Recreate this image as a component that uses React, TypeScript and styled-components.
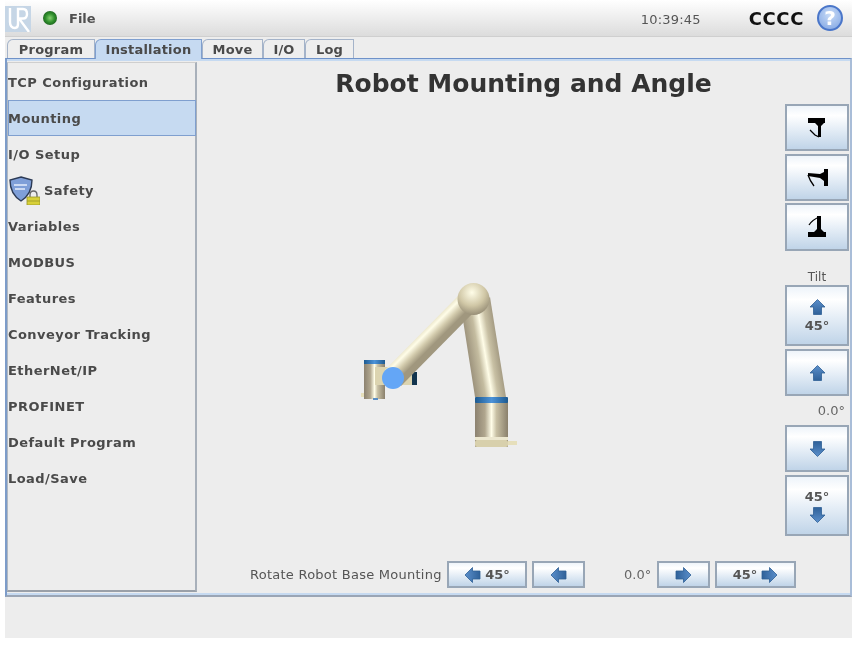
import React from 'react';
import styled, { createGlobalStyle } from 'styled-components';

const GlobalStyle = createGlobalStyle`
  html, body {
    margin: 0;
    padding: 0;
    background: #ffffff;
  }
  body {
    font-family: "DejaVu Sans", sans-serif;
    color: #3c3c3c;
  }
`;

const tabs = ['Program', 'Installation', 'Move', 'I/O', 'Log'];
const tabWidths = [88, 107, 61, 42, 49];
const menu = [
  'TCP Configuration',
  'Mounting',
  'I/O Setup',
  'Safety',
  'Variables',
  'MODBUS',
  'Features',
  'Conveyor Tracking',
  'EtherNet/IP',
  'PROFINET',
  'Default Program',
  'Load/Save',
];

type Direction = 'up' | 'down' | 'left' | 'right';

const rotation: Record<Direction, number> = { up: 0, right: 90, down: 180, left: 270 };

const Arrow: React.FC<{ dir: Direction }> = ({ dir }) => (
  <svg width="17" height="16" viewBox="0 0 16 16">
    <defs>
      <linearGradient id={`arrow-${dir}`} x1="0" y1="0" x2="0" y2="1">
        <stop offset="0" stopColor="#5b8fcb" />
        <stop offset="1" stopColor="#2f6199" />
      </linearGradient>
    </defs>
    <path
      transform={`rotate(${rotation[dir]} 8 8)`}
      d="M8 0.5 L15.5 8 L12 8 L12 15.5 L4 15.5 L4 8 L0.5 8 Z"
      fill={`url(#arrow-${dir})`}
      stroke="#2f5f96"
      strokeWidth="0.8"
    />
  </svg>
);

const MountTop = () => (
  <svg width="34" height="34" viewBox="0 0 34 34">
    <path d="M8 7 H25 V12 H24 L21 15 V26 H18 V15 L15 12 H8 Z" fill="#000" />
    <path d="M10 19 L15 24 L19 26" stroke="#000" strokeWidth="1.3" fill="none" />
  </svg>
);

const MountSide = () => (
  <svg width="34" height="34" viewBox="0 0 34 34">
    <path d="M24 8 H28 V25 H24 V20 L20 17 L8 15 V12 L20 13 L24 11 Z" fill="#000" />
    <path d="M8 14 Q10 20 14 25" stroke="#000" strokeWidth="1.3" fill="none" />
  </svg>
);

const MountFloor = () => (
  <svg width="34" height="34" viewBox="0 0 34 34">
    <path d="M8 27 V22 H14 L17 19 V6 L21 6 V19 L24 22 H26 V27 Z" fill="#000" />
    <path d="M9 15 Q12 10 20 6.5" stroke="#000" strokeWidth="1.3" fill="none" />
  </svg>
);

const RobotArm = () => (
  <RobotSvg viewBox="197 104 586 450">
    <defs>
      <linearGradient id="shaftV" x1="0" y1="0" x2="1" y2="0">
        <stop offset="0" stopColor="#8c8270" />
        <stop offset="0.3" stopColor="#b0a68e" />
        <stop offset="0.5" stopColor="#fffde8" />
        <stop offset="0.65" stopColor="#c8c0a4" />
        <stop offset="1" stopColor="#8a806c" />
      </linearGradient>
      <linearGradient id="fore" x1="467" y1="352" x2="503" y2="346" gradientUnits="userSpaceOnUse">
        <stop offset="0" stopColor="#9a907a" />
        <stop offset="0.3" stopColor="#c4bca0" />
        <stop offset="0.48" stopColor="#fffde8" />
        <stop offset="0.65" stopColor="#c8c0a4" />
        <stop offset="1" stopColor="#8e846e" />
      </linearGradient>
      <linearGradient id="upper" x1="423" y1="323" x2="439" y2="339" gradientUnits="userSpaceOnUse">
        <stop offset="0" stopColor="#cfc6a4" />
        <stop offset="0.42" stopColor="#fffde8" />
        <stop offset="0.7" stopColor="#d2caac" />
        <stop offset="1" stopColor="#a0977e" />
      </linearGradient>
      <radialGradient id="ball" cx="0.45" cy="0.3" r="0.75">
        <stop offset="0" stopColor="#fffde8" />
        <stop offset="0.55" stopColor="#d0c7a6" />
        <stop offset="1" stopColor="#8f8670" />
      </radialGradient>
      <linearGradient id="ring" x1="0" y1="0" x2="1" y2="0">
        <stop offset="0" stopColor="#1d5a90" />
        <stop offset="0.5" stopColor="#4d93d8" />
        <stop offset="1" stopColor="#1d5a90" />
      </linearGradient>
    </defs>
    {/* base */}
    <rect x="506" y="441" width="11" height="4" fill="#e6dfbb" />
    <rect x="475" y="400" width="33" height="47" rx="1" fill="url(#shaftV)" />
    <rect x="475" y="437" width="33" height="3" fill="#ece7cf" />
    <rect x="475" y="440" width="33" height="7" rx="2" fill="#d8d0ac" />
    {/* forearm */}
    <polygon points="463,320 490,297 506,397 475,397" fill="url(#fore)" />
    <rect x="475" y="397" width="33" height="6" rx="1" fill="url(#ring)" />
    {/* wrist */}
    <rect x="361" y="393" width="6" height="4" fill="#e6dfbb" />
    <rect x="364" y="360" width="21" height="39" fill="url(#shaftV)" />
    <rect x="364" y="360" width="21" height="4" fill="url(#ring)" />
    <rect x="373" y="398" width="5" height="2" fill="#5b8fc5" />
    <rect x="375" y="367" width="38" height="18" fill="#dcd4b0" />
    <rect x="412" y="372" width="5" height="13" fill="#12344f" />
    {/* upper arm */}
    <polygon points="462,292 478,308 401,386 385,370" fill="url(#upper)" />
    <circle cx="473.5" cy="299" r="16" fill="url(#ball)" />
    <circle cx="393" cy="378" r="11" fill="#64a6f6" />
  </RobotSvg>
);

const App: React.FC = () => (
  <Page>
    <GlobalStyle />
    <Header>
      <Logo viewBox="0 0 26 26">
        <rect width="26" height="26" fill="#c6d6e6" />
        <path
          d="M5 2 V16 Q5 22 10 22 Q13 22 13 18 V3 H18 Q22 3 22 8 Q22 12.5 18 12.5 H14 L24 26"
          fill="none"
          stroke="#fff"
          strokeWidth="2.4"
        />
      </Logo>
      <StatusDot />
      <FileLabel>File</FileLabel>
      <Spacer />
      <Clock>10:39:45</Clock>
      <RobotName>CCCC</RobotName>
      <HelpButton>?</HelpButton>
    </Header>

    <TabBar>
      {tabs.map((t, i) => (
        <Tab key={t} $active={t === 'Installation'} $width={tabWidths[i]}>
          {t}
        </Tab>
      ))}
    </TabBar>

    <Panel>
      <Sidebar>
        {menu.map((m) => (
          <MenuItem key={m} $selected={m === 'Mounting'}>
            {m === 'Safety' && (
              <SafetyIcon viewBox="0 0 31 29">
                <path
                  d="M12 1 L23 4 Q23 18 12 25 Q1 18 1 4 Z"
                  fill="#7f9fd8"
                  stroke="#2c3a55"
                  strokeWidth="1.4"
                />
                <path d="M5 9 H18 M6 13 H16" stroke="#e6eefb" strokeWidth="1.3" />
                <path d="M21 21 V19 Q21 15 24.5 15 Q28 15 28 19 V21" fill="none" stroke="#666" strokeWidth="1.3" />
                <rect x="18" y="21" width="13" height="8" fill="#d8d038" stroke="#9a9628" strokeWidth="0.8" />
                <path d="M18 25 H31" stroke="#9a9628" strokeWidth="0.8" />
              </SafetyIcon>
            )}
            {m}
          </MenuItem>
        ))}
      </Sidebar>

      <Main>
        <Title>Robot Mounting and Angle</Title>
        <Workspace>
          <RobotArm />
          <SideColumn>
            <IconButton $h={47} $after={3}>
              <MountTop />
            </IconButton>
            <IconButton $h={47} $after={2}>
              <MountSide />
            </IconButton>
            <IconButton $h={48} $after={0}>
              <MountFloor />
            </IconButton>
            <TiltLabel>Tilt</TiltLabel>
            <IconButton $h={61} $after={3}>
              <Arrow dir="up" />
              <Degrees>45°</Degrees>
            </IconButton>
            <IconButton $h={47} $after={0}>
              <Arrow dir="up" />
            </IconButton>
            <AngleValue>0.0°</AngleValue>
            <IconButton $h={47} $after={3}>
              <Arrow dir="down" />
            </IconButton>
            <IconButton $h={61} $after={0}>
              <Degrees>45°</Degrees>
              <Arrow dir="down" />
            </IconButton>
          </SideColumn>
        </Workspace>
        <BottomRow>
          <RotateLabel>Rotate Robot Base Mounting</RotateLabel>
          <WideButton $w={80}>
            <Arrow dir="left" />
            <Degrees>45°</Degrees>
          </WideButton>
          <WideButton $w={53}>
            <Arrow dir="left" />
          </WideButton>
          <RotateValue>0.0°</RotateValue>
          <WideButton $w={53}>
            <Arrow dir="right" />
          </WideButton>
          <WideButton $w={81}>
            <Degrees>45°</Degrees>
            <Arrow dir="right" />
          </WideButton>
        </BottomRow>
      </Main>
    </Panel>
    <Footer />
  </Page>
);

export default App;

const Page = styled.div`
  width: 847px;
  height: 638px;
  margin-left: 5px;
  background: #ededed;
  display: flex;
  flex-direction: column;
  overflow: hidden;
  filter: blur(0.3px);
`;

const Header = styled.div`
  height: 37px;
  box-sizing: border-box;
  display: flex;
  align-items: center;
  background: linear-gradient(#ffffff, #dcdcdc);
  border-bottom: 1px solid #cfcfcf;
`;

const Logo = styled.svg`
  width: 26px;
  height: 26px;
  margin-top: 1px;
`;

const StatusDot = styled.div`
  width: 14px;
  height: 14px;
  margin-left: 12px;
  border-radius: 50%;
  background: radial-gradient(circle at 50% 50%, #86d070 0, #2f8f2c 45%, #0f3f14 100%);
`;

const FileLabel = styled.span`
  margin-left: 12px;
  font-size: 13px;
  font-weight: 700;
  color: #4f4f4f;
`;

const Spacer = styled.div`
  flex: 1;
`;

const Clock = styled.span`
  font-size: 13px;
  letter-spacing: 0.2px;
  color: #555;
  margin-top: 3px;
`;

const RobotName = styled.span`
  margin-left: 48px;
  font-size: 18px;
  font-weight: 700;
  color: #111;
  letter-spacing: 0.6px;
`;

const HelpButton = styled.div`
  width: 26px;
  height: 26px;
  box-sizing: border-box;
  margin: 0 9px 0 13px;
  border-radius: 50%;
  border: 2px solid #4a76c9;
  background: radial-gradient(circle at 50% 35%, #c9dcf7, #7ea3e2);
  color: #fff;
  font-size: 20px;
  font-weight: 700;
  display: flex;
  align-items: center;
  justify-content: center;
`;

const TabBar = styled.div`
  height: 21px;
  padding: 2px 0 0 2px;
  box-sizing: border-box;
  display: flex;
  align-items: flex-end;
`;

const Tab = styled.div<{ $active: boolean; $width: number }>`
  width: ${(p) => p.$width}px;
  height: ${(p) => (p.$active ? 20 : 19)}px;
  margin-bottom: ${(p) => (p.$active ? -1 : 0)}px;
  box-sizing: border-box;
  position: relative;
  z-index: ${(p) => (p.$active ? 1 : 0)};
  display: flex;
  align-items: ${(p) => (p.$active ? 'flex-start' : 'center')};
  padding-top: ${(p) => (p.$active ? 2 : 0)}px;
  line-height: 15px;
  justify-content: center;
  font-size: 13px;
  font-weight: 700;
  letter-spacing: 0.2px;
  color: #4a4a4a;
  background: ${(p) => (p.$active ? '#c6daf1' : '#eeeeee')};
  border: 1px solid ${(p) => (p.$active ? '#7f9fcf' : '#a4b3c9')};
  border-bottom: none;
  border-radius: 6px 0 0 0;
`;

const Panel = styled.div`
  height: 539px;
  box-sizing: border-box;
  display: flex;
  padding: 3px 0 3px 0;
  border-left: 2px solid #7d9cc9;
  border-bottom: 2px solid #9aa5b5;
  border-top: 1px solid #6f92c9;
  border-right: 2px solid #a9bdd8;
  box-shadow: inset 0 2px 0 #c6daf1, inset 0 -2px 0 #c6daf1;
`;

const Sidebar = styled.div`
  width: 190px;
  box-sizing: border-box;
  display: flex;
  flex-direction: column;
  padding-top: 1px;
  border-left: 1px solid #b0b8c2;
  border-right: 2px solid #a8b0ba;
  border-bottom: 2px solid #9aa0a8;
  border-top: 1px solid #cfcfcf;
`;

const MenuItem = styled.div<{ $selected: boolean }>`
  height: 36px;
  flex: none;
  box-sizing: border-box;
  display: flex;
  align-items: center;
  font-size: 13px;
  font-weight: 700;
  letter-spacing: 0.45px;
  color: #4a4a4a;
  background: ${(p) => (p.$selected ? '#c6daf1' : 'transparent')};
  box-shadow: ${(p) => (p.$selected ? 'inset 0 0 0 1px #7f9fcf' : 'none')};
  margin-right: ${(p) => (p.$selected ? '-1px' : '0')};
`;

const SafetyIcon = styled.svg`
  width: 31px;
  height: 29px;
  margin: 0 4px 0 1px;
`;

const Main = styled.div`
  flex: 1;
  min-width: 0;
  display: flex;
  flex-direction: column;
`;

const Title = styled.h1`
  margin: 0;
  height: 42px;
  line-height: 44px;
  text-align: center;
  font-size: 25px;
  font-weight: 700;
  color: #333;
`;

const Workspace = styled.div`
  flex: 1;
  display: flex;
  min-height: 0;
`;

const RobotSvg = styled.svg`
  width: 586px;
  height: 450px;
  flex: none;
`;

const SideColumn = styled.div`
  width: 64px;
  margin-left: 2px;
  display: flex;
  flex-direction: column;
`;

const buttonFace = `
  box-sizing: border-box;
  border: 2px solid #98a6b6;
  background: linear-gradient(#eef4fa, #ffffff 22%, #e4edf6 55%, #c0d4e8);
  display: flex;
  align-items: center;
  justify-content: center;
`;

const IconButton = styled.div<{ $h: number; $after: number }>`
  ${buttonFace}
  width: 64px;
  height: ${(p) => p.$h}px;
  margin-bottom: ${(p) => p.$after}px;
  flex: none;
  flex-direction: column;
  gap: 3px;
`;

const Degrees = styled.span`
  font-size: 13px;
  font-weight: 700;
  color: #555;
`;

const TiltLabel = styled.div`
  height: 14px;
  margin-top: 19px;
  margin-bottom: 1px;
  line-height: 14px;
  text-align: center;
  font-size: 12px;
  color: #555;
`;

const AngleValue = styled.div`
  height: 29px;
  line-height: 29px;
  text-align: right;
  font-size: 13px;
  color: #666;
  padding-right: 4px;
`;

const BottomRow = styled.div`
  height: 31px;
  display: flex;
  align-items: flex-start;
  padding-left: 53px;
  box-sizing: border-box;
`;

const RotateLabel = styled.span`
  width: 197px;
  flex: none;
  line-height: 27px;
  font-size: 13px;
  letter-spacing: 0.25px;
  color: #555;
`;

const RotateValue = styled.span`
  width: 33px;
  margin-left: 34px;
  flex: none;
  line-height: 27px;
  font-size: 13px;
  color: #666;
`;

const WideButton = styled.div<{ $w: number }>`
  ${buttonFace}
  width: ${(p) => p.$w}px;
  height: 27px;
  margin-right: 5px;
  gap: 4px;
`;

const Footer = styled.div`
  flex: 1;
  background: #ededed;
`;
